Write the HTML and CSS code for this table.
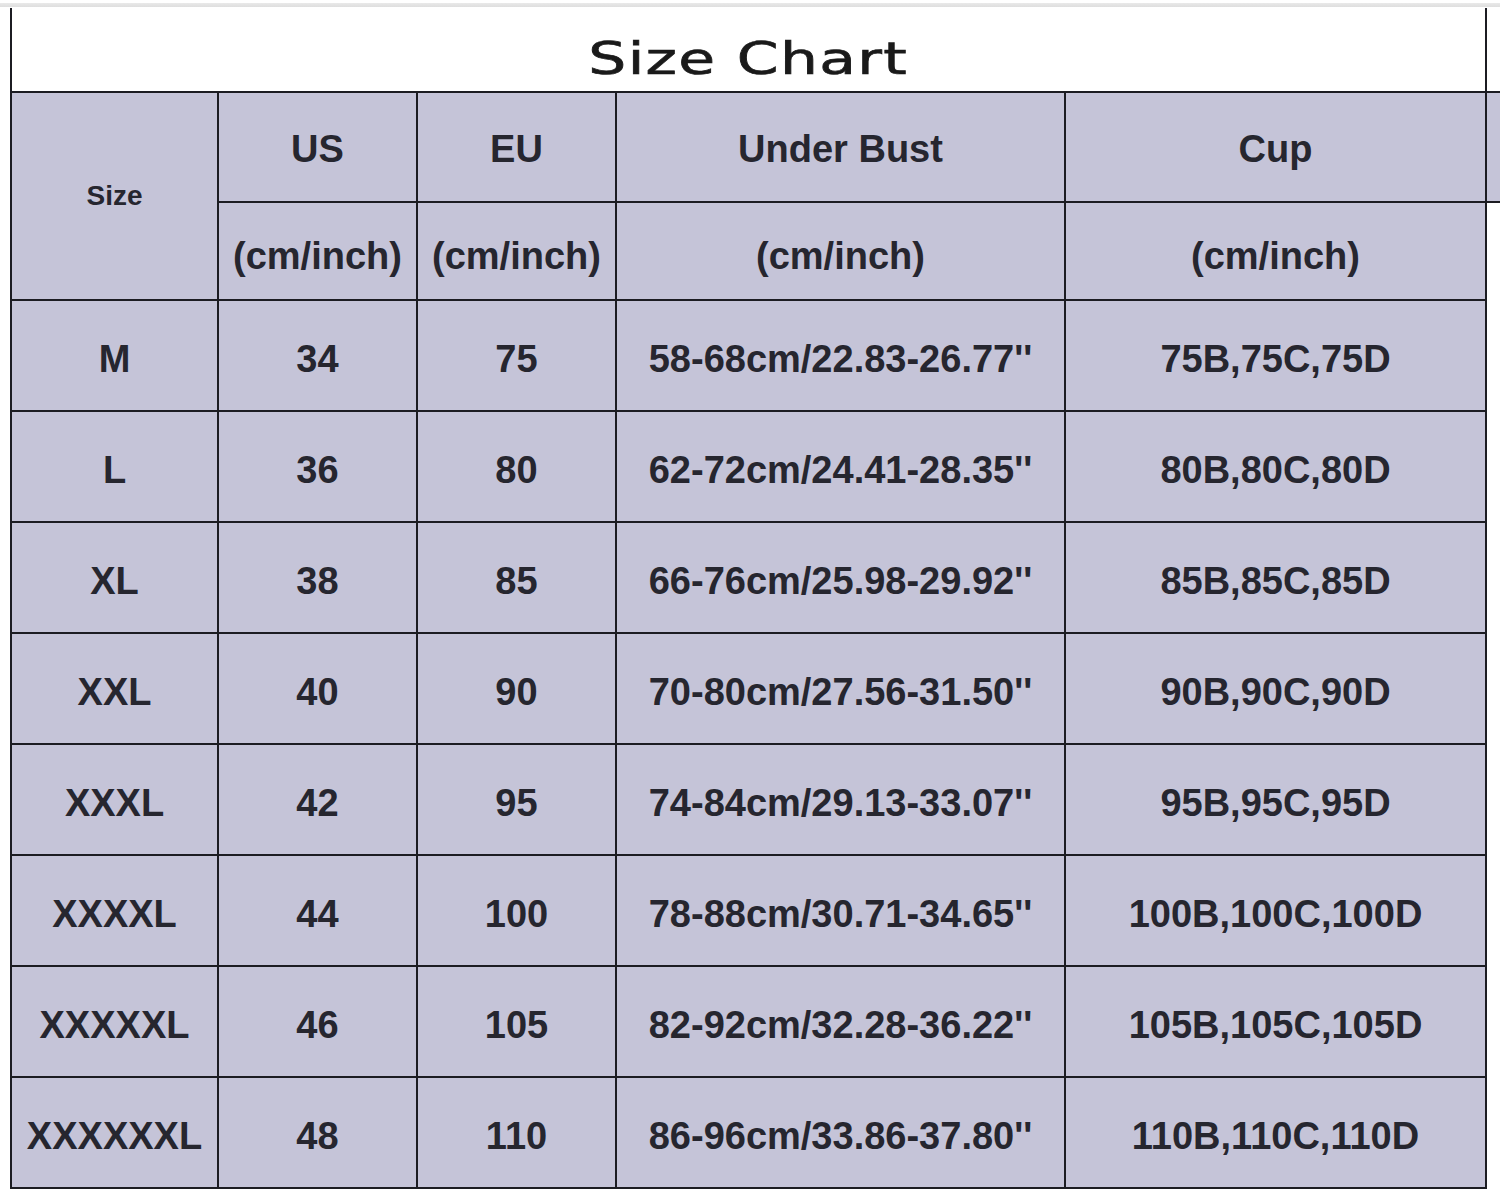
FILE: index.html
```html
<!DOCTYPE html>
<html>
<head>
<meta charset="utf-8">
<title>Size Chart</title>
<link rel="stylesheet" href="styles.css">
</head>
<body>
<div class="gridline"></div>
<div class="sheet">
  <div class="title"><span class="title-text">Size Chart</span></div>
  <div class="chart">
    <div class="cell head size-head">Size</div>
    <div class="cell head">US</div>
    <div class="cell head">EU</div>
    <div class="cell head">Under Bust</div>
    <div class="cell head">Cup</div>
    <div class="cell extra"></div>

    <div class="cell head unit">(cm/inch)</div>
    <div class="cell head unit">(cm/inch)</div>
    <div class="cell head unit">(cm/inch)</div>
    <div class="cell head unit">(cm/inch)</div>
    <div class="blank"></div>

    <div class="cell first">M</div><div class="cell">34</div><div class="cell">75</div><div class="cell">58-68cm/22.83-26.77''</div><div class="cell">75B,75C,75D</div><div class="blank"></div>
    <div class="cell first">L</div><div class="cell">36</div><div class="cell">80</div><div class="cell">62-72cm/24.41-28.35''</div><div class="cell">80B,80C,80D</div><div class="blank"></div>
    <div class="cell first">XL</div><div class="cell">38</div><div class="cell">85</div><div class="cell">66-76cm/25.98-29.92''</div><div class="cell">85B,85C,85D</div><div class="blank"></div>
    <div class="cell first">XXL</div><div class="cell">40</div><div class="cell">90</div><div class="cell">70-80cm/27.56-31.50''</div><div class="cell">90B,90C,90D</div><div class="blank"></div>
    <div class="cell first">XXXL</div><div class="cell">42</div><div class="cell">95</div><div class="cell">74-84cm/29.13-33.07''</div><div class="cell">95B,95C,95D</div><div class="blank"></div>
    <div class="cell first">XXXXL</div><div class="cell">44</div><div class="cell">100</div><div class="cell">78-88cm/30.71-34.65''</div><div class="cell">100B,100C,100D</div><div class="blank"></div>
    <div class="cell first">XXXXXL</div><div class="cell">46</div><div class="cell">105</div><div class="cell">82-92cm/32.28-36.22''</div><div class="cell">105B,105C,105D</div><div class="blank"></div>
    <div class="cell first">XXXXXXL</div><div class="cell">48</div><div class="cell">110</div><div class="cell">86-96cm/33.86-37.80''</div><div class="cell">110B,110C,110D</div><div class="blank"></div>
  </div>
</div>
</body>
</html>
```

FILE: styles.css
```css
* {
  box-sizing: border-box;
}

html, body {
  margin: 0;
  padding: 0;
  background: #ffffff;
  overflow: hidden;
}

body {
  width: 1500px;
  height: 1193px;
  font-family: "Liberation Sans", Arial, sans-serif;
}

.gridline {
  margin-top: 3px;
  height: 4px;
  background: linear-gradient(#e9e9e9, #dedede);
  margin-bottom: 1px;
}

.sheet {
  margin-left: 10px;
  width: 1490px;
}

.title {
  width: 1477px;
  height: 83px;
  border-left: 2px solid #1c1c22;
  border-right: 2px solid #1c1c22;
  background: #ffffff;
  display: flex;
  align-items: center;
  justify-content: center;
  padding-top: 17px;
}

.title-text {
  display: inline-block;
  font-family: "DejaVu Sans", sans-serif;
  font-weight: normal;
  font-size: 45px;
  letter-spacing: 1px;
  color: #1a1a1a;
  -webkit-text-stroke: 0.7px #1a1a1a;
  transform: scaleX(1.33);
}

.chart {
  display: grid;
  grid-template-columns: 207px 199px 199px 449px 421px 1fr;
  grid-template-rows: 110px 98px repeat(8, 111px);
  border-top: 2px solid #1c1c22;
  border-left: 2px solid #1c1c22;
  background: #ffffff;
}

.cell {
  background: #c5c4d8;
  border-right: 2px solid #1c1c22;
  border-bottom: 2px solid #1c1c22;
  display: flex;
  align-items: center;
  justify-content: center;
  font-weight: bold;
  font-size: 38px;
  color: #26262f;
  white-space: nowrap;
  padding-top: 7px;
}

.head {
  font-size: 38px;
  padding-top: 4px;
}

.unit {
  padding-top: 10px;
}

.size-head {
  grid-row: span 2;
  font-size: 28px;
  padding-top: 0;
}

.extra {
  border-right: none;
}

.blank {
  background: #ffffff;
}
```
